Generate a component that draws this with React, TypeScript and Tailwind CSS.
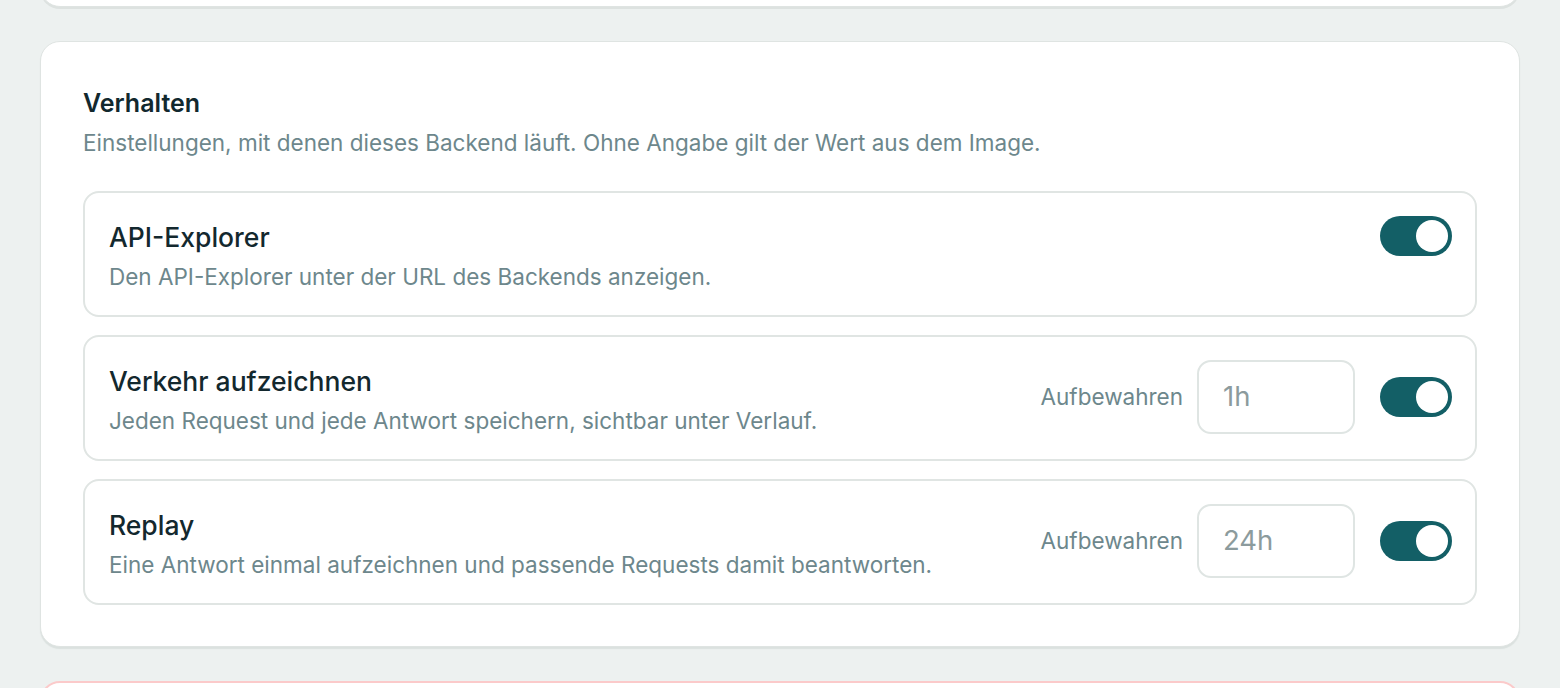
import React from "react";

function Toggle() {
  return (
    <div className="flex h-[40px] w-[72px] shrink-0 items-center justify-end rounded-full bg-[#135f66] p-[4px]">
      <div className="h-[32px] w-[32px] rounded-full bg-white" />
    </div>
  );
}

function Retention({ value }: { value: string }) {
  return (
    <div className="flex items-center">
      <span className="text-[22.5px] leading-[30px] text-[#6d878c]">Aufbewahren</span>
      <div className="ml-[14px] flex h-[74px] w-[158px] items-center rounded-[14px] border-2 border-[#dfe5e3] bg-white px-[24px] text-[27.5px] text-[#8c9b9d]">
        {value}
      </div>
    </div>
  );
}

function Row({
  title,
  desc,
  retention,
}: {
  title: string;
  desc: string;
  retention?: string;
}) {
  return (
    <div className="flex items-start justify-between rounded-[16px] border-2 border-[#e0e5e3] bg-white pb-[21px] pl-[24px] pr-[23px] pt-[23px]">
      <div className="flex flex-col">
        <div className="text-[26.5px] font-medium leading-[42px] text-[#13282e]">{title}</div>
        <div className="mt-[2px] text-[22.5px] leading-[34px] text-[#6d878c]">{desc}</div>
      </div>
      <div className="flex items-center">
        {retention && <Retention value={retention} />}
        <div className={retention ? "ml-[25px]" : ""}>
          <Toggle />
        </div>
      </div>
    </div>
  );
}

export default function App() {
  return (
    <div
      className="h-[688px] w-full overflow-hidden bg-[#edf1f0] px-[40px]"
      style={{ fontFamily: "Inter, 'Noto Sans', sans-serif" }}
    >
      <div className="flex flex-col gap-[34px]">
        <div className="-mt-[60px] h-[67px] rounded-[20px] border border-[#dfe4e2] bg-white shadow-[0_2px_0_#dde2e0]" />
        <div className="rounded-[20px] border border-[#dfe4e2] bg-white px-[42px] pb-[41px] pt-[45px] shadow-[0_2px_1px_#dbe1df]">
          <div className="text-[25px] font-semibold leading-[32px] text-[#12282e]">Verhalten</div>
          <div className="mt-[9px] text-[22.5px] leading-[30px] text-[#6d878c]">
            Einstellungen, mit denen dieses Backend läuft. Ohne Angabe gilt der Wert aus dem Image.
          </div>
          <div className="mt-[33px] flex flex-col gap-[18px]">
            <Row title="API-Explorer" desc="Den API-Explorer unter der URL des Backends anzeigen." />
            <Row
              title="Verkehr aufzeichnen"
              desc="Jeden Request und jede Antwort speichern, sichtbar unter Verlauf."
              retention="1h"
            />
            <Row
              title="Replay"
              desc="Eine Antwort einmal aufzeichnen und passende Requests damit beantworten."
              retention="24h"
            />
          </div>
        </div>
        <div className="h-[80px] rounded-[20px] border-2 border-[#fbcaca] bg-white" />
      </div>
    </div>
  );
}
